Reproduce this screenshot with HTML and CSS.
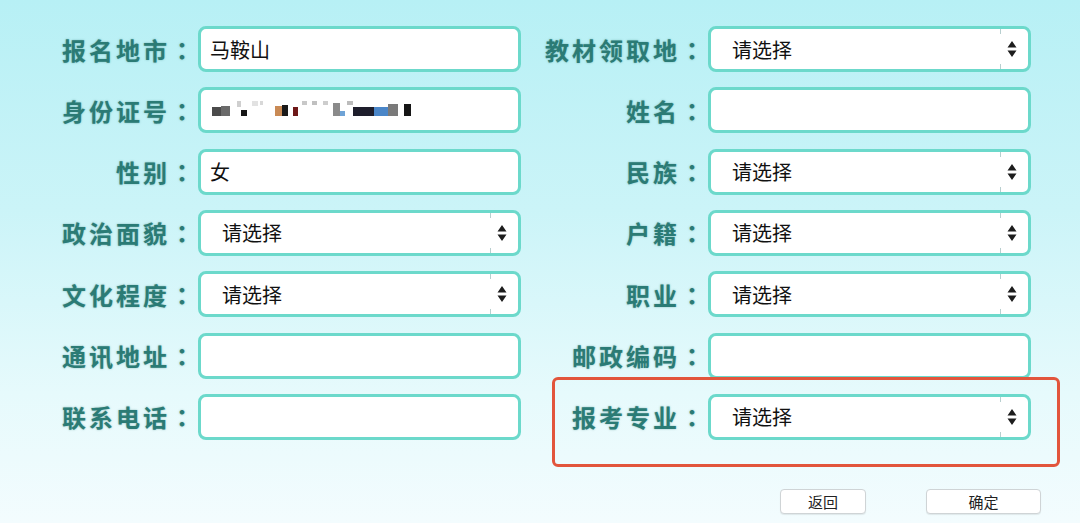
FILE: index.html
```html
<!DOCTYPE html>
<html lang="zh-CN">
<head>
  <meta charset="UTF-8" />
  <meta name="viewport" content="width=device-width, initial-scale=1.0" />
  <title>报名信息</title>
  <link rel="stylesheet" href="styles.css">
</head>
<body>
  <div class="page">
    <form class="form" onsubmit="return false">
      <label class="label">报名地市<span class="colon">：</span></label>
      <input class="field" type="text" value="马鞍山" />
      <label class="label">教材领取地<span class="colon">：</span></label>
      <div class="select-wrap">
        <select class="select"><option>请选择</option></select>
        <svg class="arrows" width="10" height="18" viewBox="0 0 10 18"><path d="M5 1 L9.5 7.5 H0.5 Z M5 17 L9.5 10.5 H0.5 Z" fill="#1d1d1d"/></svg>
      </div>

      <label class="label">身份证号<span class="colon">：</span></label>
      <div class="id-wrap">
        <input class="field" type="text" value="" />
        <!-- pixelated id number -->
        <div class="mosaic">
          <span style="width:9px;height:9px;background:#4b4b4b"></span>
          <span style="width:9px;height:10px;background:#6a6a6a"></span>
          <span style="width:7px"></span>
          <span class="t" style="width:4px;height:6px;background:#cfcfcf"></span>
          <span style="width:6px;height:6px;background:#151515"></span>
          <span style="width:5px"></span>
          <span class="t" style="width:6px;height:5px;background:#e2e2e2"></span>
          <span style="width:2px"></span>
          <span class="t" style="width:3px;height:4px;background:#d8d8d8"></span>
          <span style="width:12px"></span>
          <span style="width:7px;height:10px;background:#c98a55"></span>
          <span style="width:6px;height:11px;background:#1a1a1a"></span>
          <span style="width:5px"></span>
          <span style="width:5px;height:9px;background:#6e1818"></span>
          <span style="width:4px"></span>
          <span class="t" style="width:5px;height:4px;background:#c8c8c8"></span>
          <span style="width:5px"></span>
          <span class="t" style="width:5px;height:4px;background:#c0c0c0"></span>
          <span style="width:6px"></span>
          <span class="t" style="width:5px;height:4px;background:#cdcdcd"></span>
          <span style="width:5px"></span>
          <span style="width:7px;height:13px;background:#8a8a8a"></span>
          <span style="width:5px;height:5px;background:#6fa3d6"></span>
          <span style="width:2px"></span>
          <span class="t" style="width:6px;height:4px;background:#bcbcbc"></span>
          <span style="width:21px;height:9px;background:#1e1e2c"></span>
          <span style="width:14px;height:9px;background:#4a86c8"></span>
          <span style="width:10px;height:12px;background:#7a7a7a"></span>
          <span style="width:6px"></span>
          <span style="width:7px;height:12px;background:#161616"></span>
        </div>
      </div>
      <label class="label">姓名<span class="colon">：</span></label>
      <input class="field" type="text" />

      <label class="label">性别<span class="colon">：</span></label>
      <input class="field" type="text" value="女" />
      <label class="label">民族<span class="colon">：</span></label>
      <div class="select-wrap">
        <select class="select"><option>请选择</option></select>
        <svg class="arrows" width="10" height="18" viewBox="0 0 10 18"><path d="M5 1 L9.5 7.5 H0.5 Z M5 17 L9.5 10.5 H0.5 Z" fill="#1d1d1d"/></svg>
      </div>

      <label class="label">政治面貌<span class="colon">：</span></label>
      <div class="select-wrap">
        <select class="select"><option>请选择</option></select>
        <svg class="arrows" width="10" height="18" viewBox="0 0 10 18"><path d="M5 1 L9.5 7.5 H0.5 Z M5 17 L9.5 10.5 H0.5 Z" fill="#1d1d1d"/></svg>
      </div>
      <label class="label">户籍<span class="colon">：</span></label>
      <div class="select-wrap">
        <select class="select"><option>请选择</option></select>
        <svg class="arrows" width="10" height="18" viewBox="0 0 10 18"><path d="M5 1 L9.5 7.5 H0.5 Z M5 17 L9.5 10.5 H0.5 Z" fill="#1d1d1d"/></svg>
      </div>

      <label class="label">文化程度<span class="colon">：</span></label>
      <div class="select-wrap">
        <select class="select"><option>请选择</option></select>
        <svg class="arrows" width="10" height="18" viewBox="0 0 10 18"><path d="M5 1 L9.5 7.5 H0.5 Z M5 17 L9.5 10.5 H0.5 Z" fill="#1d1d1d"/></svg>
      </div>
      <label class="label">职业<span class="colon">：</span></label>
      <div class="select-wrap">
        <select class="select"><option>请选择</option></select>
        <svg class="arrows" width="10" height="18" viewBox="0 0 10 18"><path d="M5 1 L9.5 7.5 H0.5 Z M5 17 L9.5 10.5 H0.5 Z" fill="#1d1d1d"/></svg>
      </div>

      <label class="label">通讯地址<span class="colon">：</span></label>
      <input class="field" type="text" />
      <label class="label">邮政编码<span class="colon">：</span></label>
      <input class="field" type="text" />

      <label class="label">联系电话<span class="colon">：</span></label>
      <input class="field" type="text" />
      <label class="label">报考专业<span class="colon">：</span></label>
      <div class="select-wrap">
        <select class="select"><option>请选择</option></select>
        <svg class="arrows" width="10" height="18" viewBox="0 0 10 18"><path d="M5 1 L9.5 7.5 H0.5 Z M5 17 L9.5 10.5 H0.5 Z" fill="#1d1d1d"/></svg>
      </div>
    </form>

    <div class="highlight"></div>

    <div class="actions">
      <button class="btn btn-back">返回</button>
      <button class="btn btn-ok">确定</button>
    </div>
  </div>
</body>
</html>
```

FILE: styles.css
```css
html, body {
  margin: 0;
  height: 100%;
}
body {
  font-family: "Noto Sans CJK SC", "Noto Sans", sans-serif;
  background: linear-gradient(to bottom, #b7f0f5 0%, #cbf4f8 40%, #e6fafc 75%, #f3fcfe 100%);
  overflow: hidden;
}
.page {
  position: relative;
  height: 523px;
}
.form {
  display: grid;
  grid-template-columns: 150px 323px 179px 323px;
  grid-auto-rows: 46px;
  column-gap: 4px;
  row-gap: 15.33px;
  padding: 26px 0 0 44px;
  margin: 0;
}
.label {
  display: flex;
  align-items: center;
  justify-content: flex-end;
  font-size: 24px;
  font-weight: 700;
  letter-spacing: 3px;
  margin-right: -3px;
  color: #2b7b75;
  text-shadow: 0 0 2px rgba(40, 120, 115, 0.5);
  white-space: nowrap;
}
.colon {
  font-family: "Noto Sans CJK TC", sans-serif;
}
.field, .select {
  box-sizing: border-box;
  width: 323px;
  height: 46px;
  border: 3px solid #6cd9cb;
  border-radius: 8px;
  background: #fff;
  font-family: inherit;
  font-size: 20px;
  color: #111;
  outline: none;
}
.field {
  padding: 0 0 0 9px;
}
.select {
  appearance: none;
  -webkit-appearance: none;
  padding: 0 0 0 21px;
}
.select-wrap, .id-wrap {
  position: relative;
}
.select-wrap::before {
  content: "";
  position: absolute;
  top: 3px;
  bottom: 3px;
  right: 30px;
  width: 1px;
  background: linear-gradient(to bottom, #b8cfcf 0, #b8cfcf 5px, transparent 5px, transparent 35px, #b8cfcf 35px);
  pointer-events: none;
}
.arrows {
  position: absolute;
  right: 14px;
  top: 14px;
  pointer-events: none;
}
.mosaic {
  position: absolute;
  left: 14px;
  top: 14px;
  height: 15px;
  display: flex;
  align-items: flex-end;
  filter: blur(0.5px);
  pointer-events: none;
}
.mosaic span {
  flex: none;
}
.mosaic .t {
  align-self: flex-start;
}
.highlight {
  position: absolute;
  left: 552px;
  top: 377px;
  width: 502px;
  height: 84px;
  border: 3px solid #e2553c;
  border-radius: 6px;
  pointer-events: none;
}
.actions {
  display: flex;
  justify-content: flex-end;
  gap: 60px;
  margin-top: 49px;
  padding-right: 39px;
}
.btn {
  height: 25px;
  padding: 0;
  border: 1px solid #cfd4d6;
  border-radius: 4px;
  background: #fff;
  box-shadow: 0 1px 1px rgba(0, 0, 0, 0.08);
  font-family: inherit;
  font-size: 15px;
  color: #222;
  cursor: pointer;
}
.btn-back {
  width: 86px;
}
.btn-ok {
  width: 115px;
}
```
